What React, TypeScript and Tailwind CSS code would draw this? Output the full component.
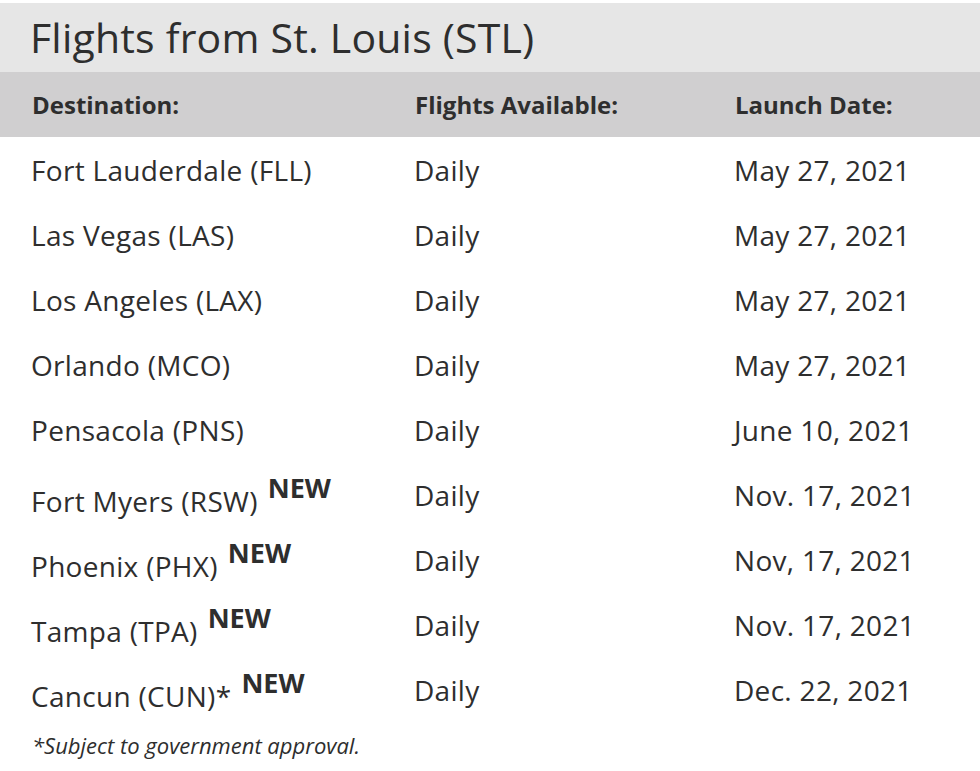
const rows: { dest: string; isNew?: boolean; date: string }[] = [
  { dest: 'Fort Lauderdale (FLL)', date: 'May 27, 2021' },
  { dest: 'Las Vegas (LAS)', date: 'May 27, 2021' },
  { dest: 'Los Angeles (LAX)', date: 'May 27, 2021' },
  { dest: 'Orlando (MCO)', date: 'May 27, 2021' },
  { dest: 'Pensacola (PNS)', date: 'June 10, 2021' },
  { dest: 'Fort Myers (RSW)', isNew: true, date: 'Nov. 17, 2021' },
  { dest: 'Phoenix (PHX)', isNew: true, date: 'Nov, 17, 2021' },
  { dest: 'Tampa (TPA)', isNew: true, date: 'Nov. 17, 2021' },
  { dest: 'Cancun (CUN)*', isNew: true, date: 'Dec. 22, 2021' },
];

export default function App() {
  return (
    <div className="w-[980px] h-[771px] bg-white text-[#2e2e2e] font-['Open_Sans',sans-serif] overflow-hidden pt-[3px]">
      <div className="h-[69px] bg-[#e6e6e6] flex items-center pl-[30px]">
        <h1 className="text-[41px] leading-none tracking-[0.2px]">Flights from St. Louis (STL)</h1>
      </div>
      <div className="h-[65px] bg-[#d0cfd0] grid grid-cols-[383px_320px_1fr] items-center pl-[32px] font-bold text-[24px]">
        <div>Destination:</div>
        <div>Flights Available:</div>
        <div>Launch Date:</div>
      </div>
      {rows.map((r) => (
        <div key={r.dest} className="h-[65px] grid grid-cols-[383px_320px_1fr] items-center pl-[31px] text-[28px] leading-[38px] tracking-[0.3px]">
          <div className="flex items-start">
            <span className={r.isNew ? 'mt-[13px]' : ''}>{r.dest}</span>
            {r.isNew && <span className="ml-[10px] font-bold text-[27px] tracking-normal">NEW</span>}
          </div>
          <div>Daily</div>
          <div>{r.date}</div>
        </div>
      ))}
      <div className="pl-[32px] mt-[9px] italic text-[22px] leading-[28px]">*Subject to government approval.</div>
    </div>
  );
}
